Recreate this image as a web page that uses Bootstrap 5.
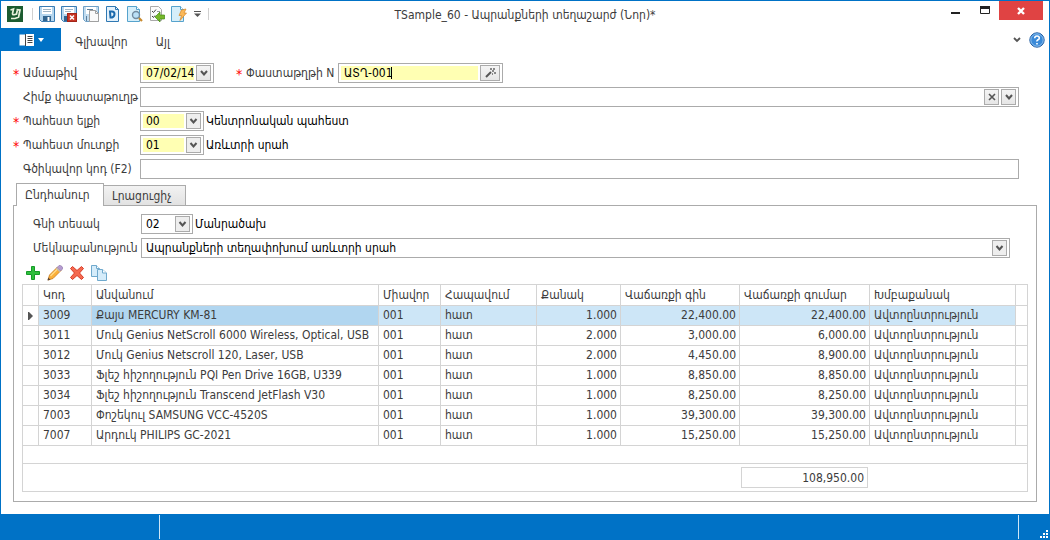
<!DOCTYPE html>
<html lang="hy">
<head>
<meta charset="utf-8">
<title>TSample_60</title>
<meta name="viewport" content="width=device-width, initial-scale=1">
<link href="https://cdn.jsdelivr.net/npm/bootstrap@5.3.0/dist/css/bootstrap.min.css" rel="stylesheet">
<script src="https://cdn.jsdelivr.net/npm/bootstrap@5.3.0/dist/js/bootstrap.bundle.min.js" defer></script>
<style>
  :root { --win: #0072c6; --line: #ababab; --grid: #d4d4d4; --ink: #3c3c3c; }
  body { font: 12px/18px "DejaVu Sans Condensed", "DejaVu Sans", sans-serif; color: var(--ink); background: #fff; }
  .app-window { border: 1px solid var(--win); border-bottom: 0; }
  .plain-btn { background: none; border: 0; padding: 0; line-height: 1; color: inherit; display: inline-flex; align-items: center; justify-content: center; }
  svg { display: block; flex: none; }
  .title-bar { display: grid; grid-template-columns: 1fr auto 1fr; height: 27px; padding: 0 6px; }
  .quick-tools { gap: 6px; padding-bottom: 2px; }
  .tool-sep { width: 1px; height: 12px; background: #d0d0d0; }
  .tool-sep-first { margin-left: 3px; }
  .btn-close-win { width: 44px; height: 19px; background: #e04343; }
  .ribbon { height: 23px; }
  .file-btn { width: 60px; height: 23px; background: var(--win); gap: 3px; }
  .ribbon a { color: var(--ink); text-decoration: none; padding: 5px 14px 0; }
  .form-area { padding: 12px 30px 0 12px; }
  .form-line { height: 20px; margin-bottom: 4px; }
  .cap { flex: none; width: 127px; padding-left: 10px; white-space: nowrap; position: relative; }
  .cap.req::before { content: "*"; color: #f00; font-size: 14px; position: absolute; left: 0; top: 1px; }
  .cap-inner { width: 108px; padding: 0; }
  .cap-doc { width: 102px; margin-left: 22px; }
  .field { border: 1px solid var(--line); height: 20px; padding: 2px; gap: 2px; background: #fff; }
  .field input, .field select { border: 0; border-radius: 0; outline: 0; color: #000; background-color: #fff; padding: 0 0 0 3px; height: 14px; width: 100%; min-width: 0; font: inherit; line-height: 14px; }
  .field.must input { background-color: #ffffb3; }
  .field button { flex: none; width: 15px; height: 16px; margin: -1px 0; border: 1px solid var(--line); background: linear-gradient(#f4f4f4, #e6e6e6); padding: 0; display: flex; align-items: center; justify-content: center; }
  .field button.wide { width: 20px; }
  .field select { appearance: none; height: 16px; margin: -1px 0; padding-left: 2px; background: url("data:image/svg+xml,%3Csvg xmlns='http://www.w3.org/2000/svg' width='15' height='16'%3E%3Crect x='.5' y='.5' width='14' height='15' fill='%23eee' stroke='%23ababab'/%3E%3Cpath d='M4.5 6l3 3.5 3-3.5' fill='none' stroke='%23555' stroke-width='2'/%3E%3C/svg%3E") right center no-repeat; }
  .field.must select { padding-left: 3px; background-image: url("data:image/svg+xml,%3Csvg xmlns='http://www.w3.org/2000/svg' width='15' height='16'%3E%3Crect x='.5' y='.5' width='14' height='15' fill='%23eee' stroke='%23ababab'/%3E%3Cpath d='M4.5 6l3 3.5 3-3.5' fill='none' stroke='%23555' stroke-width='2'/%3E%3C/svg%3E"), linear-gradient(#ffffb3, #ffffb3); background-size: 15px 16px, calc(100% - 17px) 14px; background-position: right center, left center; }
  .w-date { width: 74px; } .w-doc { width: 165px; } .w-code { width: 64px; } .w-price { width: 52px; }
  .w-date input { font-size: 12px; }
  .text-caret { position: absolute; left: 52px; top: 3px; width: 1px; height: 12px; background: #000; }
  .note { color: #000; margin-left: 2px; white-space: nowrap; }
  .page-tabs { height: 22px; padding-left: 3px; align-items: flex-end; }
  .page-tabs button { border: 1px solid var(--line); border-bottom: 0; color: var(--ink); background: linear-gradient(#f2f2f2, #e2e2e2); padding: 0 8px; height: 20px; width: 83px; text-align: left; line-height: 20px; margin-left: -1px; white-space: nowrap; }
  .page-tabs button.active { background: #fff; height: 23px; width: 88px; margin: 0 0 -1px; position: relative; z-index: 1; }
  .tab-panel { margin: 0 12px 12px; border: 1px solid var(--line); padding: 8px 8px 9px; }
  .detail-lines { padding: 0 18px 0 11px; }
  .row-tools { gap: 6px; height: 22px; padding: 3px 3px 0; }
  .goods-wrap { border: 1px solid var(--grid); }
  .goods { table-layout: fixed; width: 100%; color: var(--ink); border-collapse: separate; border-spacing: 0; }
  .goods th, .goods td { font-weight: 400; height: 20px; line-height: 19px; padding: 0 3px 0 4px; border-right: 1px solid var(--grid); border-bottom: 1px solid var(--grid); overflow: hidden; white-space: nowrap; }
  .goods th { height: 21px; line-height: 20px; }
  .goods tr > :last-child { border-right: 0; }
  .goods tr > :first-child { padding: 0 0 0 5px; }
  .goods .picked td:not(:first-child):not(:last-child) { background: #cde6f7; }
  .goods .picked td:nth-child(3) { background: #b1d6f0 !important; }
  .goods .total-gap td { height: 18px; }
  .goods tfoot td { border: 0; height: 27px; padding: 0; overflow: visible; }
  .total-box { display: block; border: 1px solid var(--grid); height: 21px; line-height: 21px; padding: 0 3px; margin: 0 2px 0 1px; text-align: right; }
  .status-bar { height: 27px; background: var(--win); }
  .status-bar > span { border-right: 1px solid #cfe6f6; height: 24px; margin-top: 1px; }
  .status-first { width: 159px; }
  .size-grip { margin: 0 0 3px 21px; }
</style>
</head>
<body>
<div class="app-window d-flex flex-column min-vh-100">
  <header class="title-bar">
    <div class="quick-tools d-flex align-items-center">
      <svg width="16" height="16" viewBox="0 0 16 16"><rect width="16" height="16" fill="#1c5c30"/><path d="M3.500 4 6.500 3 5.500 7.500q0 1.500 1.500 1.200L9.500 8l1-4.500M4 12.500h4l4-1.500M9.500 3.500l3.500.5-1.500 7.500" fill="none" stroke="#e9f2dc" stroke-width="1.700"/></svg>
      <span class="tool-sep tool-sep-first"></span>
      <button class="plain-btn" aria-label="Save"><svg width="16" height="16" viewBox="0 0 16 16"><path d="M.5.5h15v15H2.500l-2-2z" fill="#b5d6ee" stroke="#3a7cb3"/><path d="M3 1h10v7H3z" fill="#fff"/><path d="M4 3.500h8M4 5.500h8" stroke="#9fb4c4"/><path d="M4 10h8v5H4z" fill="#32658f"/><path d="M8.500 11h2v4h-2z" fill="#fff"/></svg></button>
      <button class="plain-btn" aria-label="Save and close"><svg width="16" height="16" viewBox="0 0 16 16"><path d="M.5.5h15v15H2.500l-2-2z" fill="#b5d6ee" stroke="#3a7cb3"/><path d="M3 1h10v7H3z" fill="#fff"/><path d="M4 3.500h8M4 5.500h6" stroke="#9fb4c4"/><path d="M3 10h4v5H3z" fill="#32658f"/><rect x="6.500" y="7.500" width="9" height="8" fill="#c83525" stroke="#a32418"/><path d="m9 9.500 4 4m0-4-4 4" stroke="#fff" stroke-width="1.600"/></svg></button>
      <button class="plain-btn" aria-label="Save and new"><svg width="16" height="16" viewBox="0 0 16 16"><path d="M.5.5h15v15H2.500l-2-2z" fill="#c2dcef" stroke="#6fa0c6"/><path d="M3 1h10v7H3z" fill="#fff"/><path d="M4 3.500h6M3.500 10v5" stroke="#5c7f9c"/><path d="M6.500 4.500h6l3 3v8h-9z" fill="#fafafa" stroke="#a0a0a0"/><path d="M12.500 4.500v3h3" fill="none" stroke="#a0a0a0"/></svg></button>
      <button class="plain-btn" aria-label="Document"><svg width="16" height="16" viewBox="0 0 16 16"><path d="M1.500.5h9l3 3v12h-12z" fill="#e3f1fb" stroke="#2f78b3"/><path d="M10.500.5v3h3" fill="none" stroke="#2f78b3"/><path d="M5 5.500h2q2.500 0 2.500 2.500T7 11.500H5.500z" fill="none" stroke="#1a69ac" stroke-width="2"/></svg></button>
      <button class="plain-btn" aria-label="Preview"><svg width="16" height="16" viewBox="0 0 16 16"><path d="M.5.5h9l3 3v12H.5z" fill="#d5eefa" stroke="#56a3cd"/><path d="M9.500.5v3h3" fill="#fff" stroke="#56a3cd"/><circle cx="9" cy="9" r="3.500" fill="#b9e0f7" stroke="#728ba0" stroke-width="1.400"/><path d="m12 12 3 3" stroke="#c88a2e" stroke-width="2.200"/></svg></button>
      <button class="plain-btn" aria-label="Check"><svg width="16" height="16" viewBox="0 0 16 16"><path d="M1.500.5h8l3 3v11h-11z" fill="#fbfbfb" stroke="#aaa"/><path d="m3 5 1.500 1.500L7 3.500M3 10l1.500 1.500L6 9.500" fill="none" stroke="#444"/><path d="M8 5.500h3" stroke="#999"/><path d="m6 11 5-5v3h4.500v4H11v3z" fill="#78b82a" stroke="#3f8a12" stroke-width=".7"/></svg></button>
      <button class="plain-btn" aria-label="Run"><svg width="16" height="16" viewBox="0 0 16 16"><path d="M.5.5h9l3 3v12H.5z" fill="#d5eefa" stroke="#56a3cd"/><path d="M9.500.5v3h3" fill="#fff" stroke="#56a3cd"/><path d="m10.500 4 4.500-1-2 4h2.500L9 14.500l1.500-5H8z" fill="#fbb95a" stroke="#d58727" stroke-width=".7"/></svg></button>
      <button class="plain-btn" aria-label="More"><svg width="9" height="8" viewBox="0 0 9 8"><path d="M1 1.500h7" stroke="#555"/><path d="M1 3.500h7L4.500 7z" fill="#555"/></svg></button>
      <span class="tool-sep"></span>
    </div>
    <div class="align-self-center">TSample_60 - Ապրանքների տեղաշարժ (Նոր)*</div>
    <div class="d-flex justify-content-end align-items-start">
      <button class="plain-btn mt-1 me-3" aria-label="Minimize"><svg width="12" height="11" viewBox="0 0 12 11"><path d="M0 8h9" stroke="#222" stroke-width="2"/></svg></button>
      <button class="plain-btn mt-1 me-2" aria-label="Maximize"><svg width="12" height="11" viewBox="0 0 12 11"><path d="M1.500 2v6.500h9V2" fill="none" stroke="#222"/><path d="M1 2.500h10" stroke="#222" stroke-width="3"/></svg></button>
      <button class="plain-btn btn-close-win" aria-label="Close"><svg width="8" height="8" viewBox="0 0 8 8"><path d="m1 1 6 6m0-6L1 7" stroke="#fff" stroke-width="2.400"/></svg></button>
    </div>
  </header>
  <nav class="ribbon d-flex align-items-center">
    <button class="plain-btn file-btn" aria-label="Menu"><svg width="16" height="12" viewBox="0 0 16 12"><rect x=".5" y=".5" width="6" height="11" fill="#fff"/><rect x="7" width="8" height="12" fill="#fff"/><path d="M8.500 2.500h5m-5 2h5m-5 2h5m-5 2h5M6.500 0v12" stroke="#444"/></svg><svg width="6" height="4" viewBox="0 0 6 4"><path d="M0 0h6L3 4z" fill="#fff"/></svg></button>
    <a href="#">Գլխավոր</a><a href="#">Այլ</a>
    <button class="plain-btn ms-auto me-2" aria-label="Collapse"><svg width="8" height="6" viewBox="0 0 8 6"><path d="m1 1 3 3 3-3" fill="none" stroke="#555" stroke-width="1.800"/></svg></button>
    <button class="plain-btn me-1" aria-label="Help"><svg width="16" height="16" viewBox="0 0 16 16"><circle cx="8" cy="8" r="7.200" fill="#3a8ad8" stroke="#2560a4"/><circle cx="8" cy="8" r="6.200" fill="none" stroke="#9fcbf3" stroke-width=".8"/><path d="M5.700 6.200Q5.800 4 8 4t2.300 1.900Q10.300 7 9 7.800T8 9.500M8 11v1.500" fill="none" stroke="#fff" stroke-width="1.600"/></svg></button>
  </nav>

  <form class="form-area">
    <div class="form-line d-flex align-items-center">
      <label class="cap req" for="date">Ամսաթիվ</label>
      <div class="field must w-date d-flex align-items-center"><input id="date" value="07/02/14"><button type="button" aria-label="Calendar"><svg width="8" height="6" viewBox="0 0 8 6"><path d="m1 1 3 3.500L7 1" fill="none" stroke="#555" stroke-width="2"/></svg></button></div>
      <label class="cap cap-doc req" for="doc">Փաստաթղթի N</label>
      <div class="field must w-doc d-flex align-items-center position-relative"><input id="doc" value="ԱՏՂ-001"><span class="text-caret"></span><button type="button" class="wide" aria-label="Generate"><svg width="11" height="10" viewBox="0 0 11 10"><path d="m1 9 5-5" stroke="#555" stroke-width="2"/><path d="M5 1h2M8 1h2M7 3h2M9 5h2M7 6h1" stroke="#666" stroke-width="1.500"/></svg></button></div>
    </div>
    <div class="form-line d-flex align-items-center">
      <label class="cap" for="base">Հիմք փաստաթուղթ</label>
      <div class="field flex-grow-1 d-flex align-items-center"><input id="base"><button type="button" aria-label="Clear"><svg width="8" height="8" viewBox="0 0 8 8"><path d="m1 1 6 6m0-6L1 7" stroke="#555" stroke-width="1.600"/></svg></button><button type="button" aria-label="Open"><svg width="8" height="6" viewBox="0 0 8 6"><path d="m1 1 3 3.500L7 1" fill="none" stroke="#555" stroke-width="2"/></svg></button></div>
    </div>
    <div class="form-line d-flex align-items-center">
      <label class="cap req" for="from">Պահեստ ելքի</label>
      <div class="field must w-code d-flex align-items-center"><select id="from"><option>00</option></select></div><span class="note">Կենտրոնական պահեստ</span>
    </div>
    <div class="form-line d-flex align-items-center">
      <label class="cap req" for="to">Պահեստ մուտքի</label>
      <div class="field must w-code d-flex align-items-center"><select id="to"><option>01</option></select></div><span class="note">Առևտրի սրահ</span>
    </div>
    <div class="form-line d-flex align-items-center">
      <label class="cap" for="bar">Գծիկավոր կոդ (F2)</label>
      <div class="field flex-grow-1 d-flex align-items-center"><input id="bar"></div>
    </div>
  </form>

  <div class="mx-2 px-1"><div class="page-tabs d-flex" role="tablist">
    <button class="active" role="tab" aria-selected="true">Ընդհանուր</button><button role="tab" aria-selected="false">Լրացուցիչ</button>
  </div></div>
  <main class="tab-panel">
    <div class="detail-lines">
      <div class="form-line d-flex align-items-center">
        <label class="cap cap-inner" for="price">Գնի տեսակ</label>
        <div class="field w-price d-flex align-items-center"><select id="price"><option>02</option></select></div><span class="note">Մանրածախ</span>
      </div>
      <div class="form-line d-flex align-items-center">
        <label class="cap cap-inner" for="memo">Մեկնաբանություն</label>
        <div class="field flex-grow-1 d-flex align-items-center"><select id="memo"><option>Ապրանքների տեղափոխում առևտրի սրահ</option></select></div>
      </div>
    </div>
    <div class="row-tools d-flex align-items-start">
      <button class="plain-btn" aria-label="Add"><svg width="16" height="16" viewBox="0 0 16 16"><path d="M6.500 1.500h3v5h5v3h-5v5h-3v-5h-5v-3h5z" fill="#2fbf3d" stroke="#169a28"/></svg></button>
      <button class="plain-btn" aria-label="Edit"><svg width="16" height="16" viewBox="0 0 16 16"><path d="m1 15 1.500-5 8-8L14 5.500l-8 8z" fill="#fbb03a" stroke="#c77a1c" stroke-width=".8"/><path d="m3.500 11 8-8" stroke="#ffdc8c" stroke-width="1.200"/><path d="m10 2.500 2-2q1.500-.5 3 1t.5 2.500l-2 2z" fill="#b59bd0" stroke="#8972a5" stroke-width=".6"/><path d="m9.500 3 3.500 3.500" stroke="#bbb" stroke-width="1.200"/><path d="m.5 15.500.7-3 2.300 2.300z" fill="#5a4636"/></svg></button>
      <button class="plain-btn" aria-label="Delete"><svg width="16" height="16" viewBox="0 0 16 16"><path d="m3.500 1.500 4.500 4 4.500-4 2 2-4 4.500 4 4.500-2 2-4.500-4-4.500 4-2-2 4-4.500-4-4.500z" fill="#f4694f" stroke="#d93a25"/></svg></button>
      <button class="plain-btn" aria-label="Copy"><svg width="16" height="16" viewBox="0 0 16 16"><path d="M.5.5h5l3 3v8h-8z" fill="#d5ecfa" stroke="#6fa9cd"/><path d="M5.500.5v3h3" fill="#fff" stroke="#6fa9cd"/><path d="M6.500 4.500h5l4 3.500v7.500h-9z" fill="#d5ecfa" stroke="#6fa9cd"/><path d="M11.500 4.500V8h4" fill="#fff" stroke="#6fa9cd"/></svg></button>
    </div>
    <div class="goods-wrap">
      <table class="goods">
        <colgroup><col style="width:16px"><col style="width:53px"><col><col style="width:62px"><col style="width:96px"><col style="width:84px"><col style="width:119px"><col style="width:130px"><col style="width:146px"><col style="width:11px"></colgroup>
        <thead><tr><th></th><th>Կոդ</th><th>Անվանում</th><th>Միավոր</th><th>Հապավում</th><th>Քանակ</th><th>Վաճառքի գին</th><th>Վաճառքի գումար</th><th>Խմբաքանակ</th><th></th></tr></thead>
        <tbody>
          <tr class="picked"><td><svg width="5" height="8" viewBox="0 0 5 8"><path d="M0 0h1l4 4-4 4H0z" fill="#555"/></svg></td><td>3009</td><td>Քայս MERCURY KM-81</td><td>001</td><td>հատ</td><td class="text-end">1.000</td><td class="text-end">22,400.00</td><td class="text-end">22,400.00</td><td>Ավտոընտրություն</td><td></td></tr>
          <tr><td></td><td>3011</td><td>Մուկ Genius NetScroll 6000 Wireless, Optical, USB</td><td>001</td><td>հատ</td><td class="text-end">2.000</td><td class="text-end">3,000.00</td><td class="text-end">6,000.00</td><td>Ավտոընտրություն</td><td></td></tr>
          <tr><td></td><td>3012</td><td>Մուկ Genius Netscroll 120, Laser, USB</td><td>001</td><td>հատ</td><td class="text-end">2.000</td><td class="text-end">4,450.00</td><td class="text-end">8,900.00</td><td>Ավտոընտրություն</td><td></td></tr>
          <tr><td></td><td>3033</td><td>Ֆլեշ հիշողություն PQI Pen Drive 16GB, U339</td><td>001</td><td>հատ</td><td class="text-end">1.000</td><td class="text-end">8,850.00</td><td class="text-end">8,850.00</td><td>Ավտոընտրություն</td><td></td></tr>
          <tr><td></td><td>3034</td><td>Ֆլեշ հիշողություն Transcend JetFlash V30</td><td>001</td><td>հատ</td><td class="text-end">1.000</td><td class="text-end">8,250.00</td><td class="text-end">8,250.00</td><td>Ավտոընտրություն</td><td></td></tr>
          <tr><td></td><td>7003</td><td>Փոշեկուլ SAMSUNG VCC-4520S</td><td>001</td><td>հատ</td><td class="text-end">1.000</td><td class="text-end">39,300.00</td><td class="text-end">39,300.00</td><td>Ավտոընտրություն</td><td></td></tr>
          <tr><td></td><td>7007</td><td>Արդուկ PHILIPS GC-2021</td><td>001</td><td>հատ</td><td class="text-end">1.000</td><td class="text-end">15,250.00</td><td class="text-end">15,250.00</td><td>Ավտոընտրություն</td><td></td></tr>
          <tr class="total-gap"><td colspan="10"></td></tr>
        </tbody>
        <tfoot><tr><td colspan="7"></td><td><output class="total-box">108,950.00</output></td><td colspan="2"></td></tr></tfoot>
      </table>
    </div>
  </main>
  <footer class="status-bar d-flex mt-auto">
    <span class="status-first"></span><span class="flex-grow-1"></span>
    <svg class="size-grip align-self-end" width="9" height="8" viewBox="0 0 9 8"><path d="M6 0h2v2H6zM6 3h2v2H6zM3 3h2v2H3zM0 6h2v2H0zM3 6h2v2H3zM6 6h2v2H6z" fill="#fff"/></svg>
  </footer>
</div>
</body>
</html>
